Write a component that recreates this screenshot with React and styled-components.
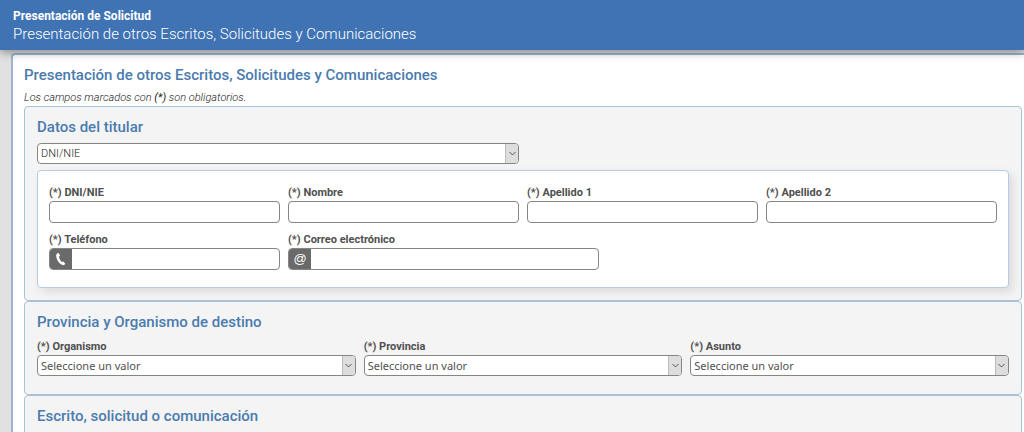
import React from "react";
// Styles
import styled, { createGlobalStyle } from "styled-components";

// #region styled-components
const GlobalStyle = createGlobalStyle`
  * {
    box-sizing: border-box;
  }

  body {
    margin: 0;
    background: #e2e1e2;
    color: #444;
    font-family: Roboto, "Liberation Sans", sans-serif;
    font-size: 11px;
  }
`;

const StyledPage = styled.div`
  display: flex;
  flex-direction: column;
  height: 100vh;
  overflow: hidden;
`;

const StyledHeader = styled.header`
  z-index: 1;
  flex: none;
  padding: 7px 13px;
  background: #3f73b4;
  color: #fff;
  box-shadow: 0 2px 9px rgba(0, 0, 0, 0.42);
`;

const AppTitle = styled.p`
  margin: 0;
  font-size: 12px;
  font-weight: 700;
  line-height: 18px;
`;

const AppSubtitle = styled.p`
  margin: 0;
  font-size: 15px;
  font-weight: 300;
  line-height: 18px;
`;

const StyledMain = styled.main`
  flex: 1 0 auto;
  margin: 3px 0 0 11px;
  padding: 10px 2px 0 11px;
  border: 2px solid #9db4d0;
  border-width: 2px 0 0 2px;
  border-radius: 4px 0 0 0;
  background: #fff;
`;

const Heading = styled.h1`
  margin: 0;
  color: #4a7bae;
  font-size: 15px;
  font-weight: 500;
  line-height: 20px;
`;

const Hint = styled.p`
  margin: 5px 0 0;
  color: #222;
  font-size: 11px;
  font-style: italic;
  font-weight: 300;
  line-height: 16px;
`;

const StyledSection = styled.section`
  min-height: ${({ $minHeight }) => $minHeight || "auto"};
  padding: 11px 12px ${({ $bottom }) => $bottom || "12px"};
  border: 1px solid #a9c2da;
  border-radius: 4px;
  background: #f4f4f5;
`;

const SectionTitle = styled.h2`
  margin: 0 0 6px;
  color: #4a7bae;
  font-size: 15px;
  font-weight: 500;
  line-height: 19px;
`;

const Card = styled.div`
  margin-top: 6px;
  padding: 13px 11px 17px;
  border: 1px solid #b4cbe0;
  border-radius: 4px;
  background: #fff;
  box-shadow: 4px 4px 10px rgba(0, 0, 0, 0.1);
`;

const Grid = styled.div`
  display: grid;
  grid-template-columns: repeat(12, 1fr);
  gap: 8px;
`;

const StyledField = styled.div`
  display: flex;
  flex-direction: column;
  grid-column: span ${({ $span }) => $span};
  min-width: 0;
`;

const Label = styled.label`
  color: #505050;
  font-size: 11px;
  font-weight: 700;
  line-height: 17px;
`;

const InputGroup = styled.div`
  display: flex;
  height: 22px;
  border: 1px solid #858585;
  border-radius: 4px;
  background: #fff;
  overflow: hidden;
`;

const AddOn = styled.span`
  display: grid;
  flex: none;
  place-items: center;
  width: 22px;
  background: #6a6a6a;
  color: #fff;
  font-family: "Liberation Sans", sans-serif;
  font-size: 13px;
  line-height: 16px;
`;

const Input = styled.input`
  flex: 1;
  min-width: 0;
  padding: 0 4px;
  border: 0;
  outline: 0;
  background: transparent;
  font: inherit;
`;

const SelectBox = styled.div`
  position: relative;
`;

const StyledSelect = styled.select`
  display: block;
  width: 100%;
  height: 21px;
  padding: 0 20px 0 3px;
  border: 1px solid #858585;
  border-radius: 4px;
  appearance: none;
  background: #fff;
  color: ${({ $wide }) => ($wide ? "#505050" : "#222")};
  font-family: ${({ $wide }) =>
    $wide ? '"Noto Sans", sans-serif' : "Roboto, sans-serif"};
  font-size: 11px;
  font-weight: ${({ $wide }) => ($wide ? 400 : 300)};
`;

const Arrow = styled.span`
  position: absolute;
  top: 1px;
  right: 1px;
  bottom: 1px;
  display: grid;
  place-items: center;
  width: 13px;
  border-left: 1px solid #bbb;
  border-radius: 0 3px 3px 0;
  background: #ddd;
  pointer-events: none;
`;
// #endregion

// #region component
const PhoneIcon = () => (
  <svg width="12" height="14" viewBox="0 0 12 14" aria-hidden="true">
    <path
      d="M2.2 1.4 3.8 1 5 3.7 4 4.8C4.3 6.8 5.3 8.6 6.8 10l1.5-.4 2 2.2-1.3 1.5C4.8 13.2 1 8 1.2 3.2 1.3 2.2 1.7 1.6 2.2 1.4Z"
      fill="#fff"
    />
  </svg>
);

const Select = ({ id, value, wide, ...rest }) => (
  <SelectBox>
    <StyledSelect id={id} $wide={wide} {...rest}>
      <option>{value}</option>
    </StyledSelect>
    <Arrow>
      <svg width="7" height="5" viewBox="0 0 7 5" aria-hidden="true">
        <path d="M.5 1 3.5 4l3-3" fill="none" stroke="#555" />
      </svg>
    </Arrow>
  </SelectBox>
);

const Field = ({ id, label, span, children }) => (
  <StyledField $span={span}>
    <Label htmlFor={id}>(*) {label}</Label>
    {children}
  </StyledField>
);

const holderFields = [
  { id: "dni", label: "DNI/NIE", span: 3 },
  { id: "nombre", label: "Nombre", span: 3 },
  { id: "apellido1", label: "Apellido 1", span: 3 },
  { id: "apellido2", label: "Apellido 2", span: 3 },
  { id: "telefono", label: "Teléfono", span: 3, type: "tel", icon: <PhoneIcon /> },
  { id: "correo", label: "Correo electrónico", span: 4, type: "email", icon: "@" },
];

const targetFields = [
  { id: "organismo", label: "Organismo" },
  { id: "provincia", label: "Provincia" },
  { id: "asunto", label: "Asunto" },
];

const App = () => (
  <>
    <GlobalStyle />
    <StyledPage>
      <StyledHeader>
        <AppTitle>Presentación de Solicitud</AppTitle>
        <AppSubtitle>
          Presentación de otros Escritos, Solicitudes y Comunicaciones
        </AppSubtitle>
      </StyledHeader>
      <StyledMain>
        <Heading>
          Presentación de otros Escritos, Solicitudes y Comunicaciones
        </Heading>
        <Hint>
          Los campos marcados con <b>(*)</b> son obligatorios.
        </Hint>

        <StyledSection>
          <SectionTitle>Datos del titular</SectionTitle>
          <Grid>
            <StyledField $span={6}>
              <Select aria-label="Tipo de documento" value="DNI/NIE" />
            </StyledField>
          </Grid>
          <Card>
            <Grid>
              {holderFields.map(({ id, label, span, type, icon }) => (
                <Field key={id} id={id} label={label} span={span}>
                  <InputGroup>
                    {icon && <AddOn>{icon}</AddOn>}
                    <Input id={id} type={type || "text"} />
                  </InputGroup>
                </Field>
              ))}
            </Grid>
          </Card>
        </StyledSection>

        <StyledSection $bottom="18px">
          <SectionTitle>Provincia y Organismo de destino</SectionTitle>
          <Grid>
            {targetFields.map(({ id, label }) => (
              <Field key={id} id={id} label={label} span={4}>
                <Select id={id} value="Seleccione un valor" wide />
              </Field>
            ))}
          </Grid>
        </StyledSection>

        <StyledSection $minHeight="120px">
          <SectionTitle>Escrito, solicitud o comunicación</SectionTitle>
        </StyledSection>
      </StyledMain>
    </StyledPage>
  </>
);
// #endregion

export default App;
